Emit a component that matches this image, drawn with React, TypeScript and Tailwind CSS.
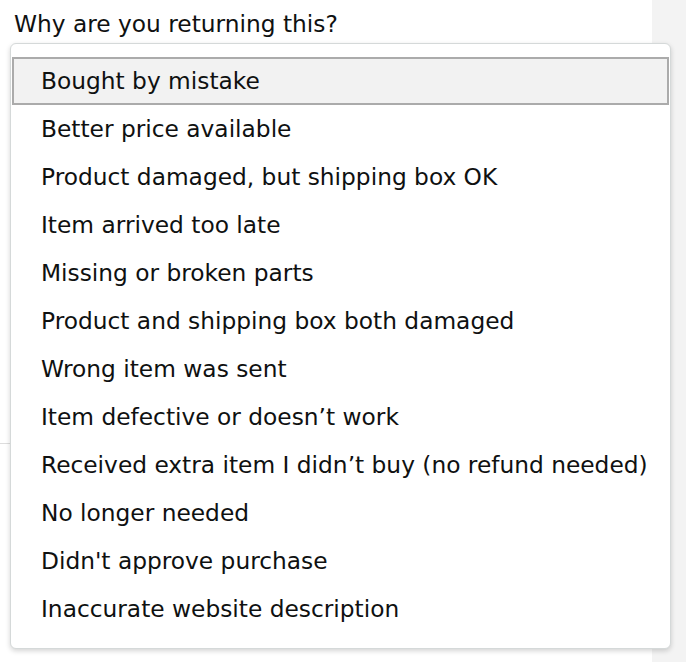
const reasons = [
  'Bought by mistake',
  'Better price available',
  'Product damaged, but shipping box OK',
  'Item arrived too late',
  'Missing or broken parts',
  'Product and shipping box both damaged',
  'Wrong item was sent',
  'Item defective or doesn’t work',
  'Received extra item I didn’t buy (no refund needed)',
  'No longer needed',
  "Didn't approve purchase",
  'Inaccurate website description',
];

export default function App() {
  const selected = 0;

  return (
    <div className="relative flex w-[686px] h-[662px] overflow-hidden bg-white text-[#0f1111] font-['DejaVu_Sans',sans-serif]">
      {/* Page content behind the open dropdown */}
      <div className="w-[652px] bg-white">
        <h2 className="pl-[14px] pt-[9px] text-[23.3px] leading-[30px] font-normal">
          Why are you returning this?
        </h2>
        <div className="h-[405px] border-b border-[#dddddd]" />
      </div>
      <div className="flex-1 bg-[#f3f3f3]" />

      {/* Dropdown menu */}
      <ul className="absolute left-[10px] top-[43px] w-[661px] px-px pt-[13px] pb-[15px] bg-white border border-[#d5d9d9] rounded-[6px] shadow-[0_2px_5px_rgba(15,17,17,0.18)]">
        {reasons.map((r, i) => (
          <li
            key={r}
            className={`h-[48px] flex items-center pl-[27px] text-[23.3px] leading-[48px] whitespace-nowrap border-2 ${
              i === selected ? 'bg-[#f2f2f2] border-[#ababab]' : 'border-transparent'
            }`}
          >
            {r}
          </li>
        ))}
      </ul>
    </div>
  );
}
